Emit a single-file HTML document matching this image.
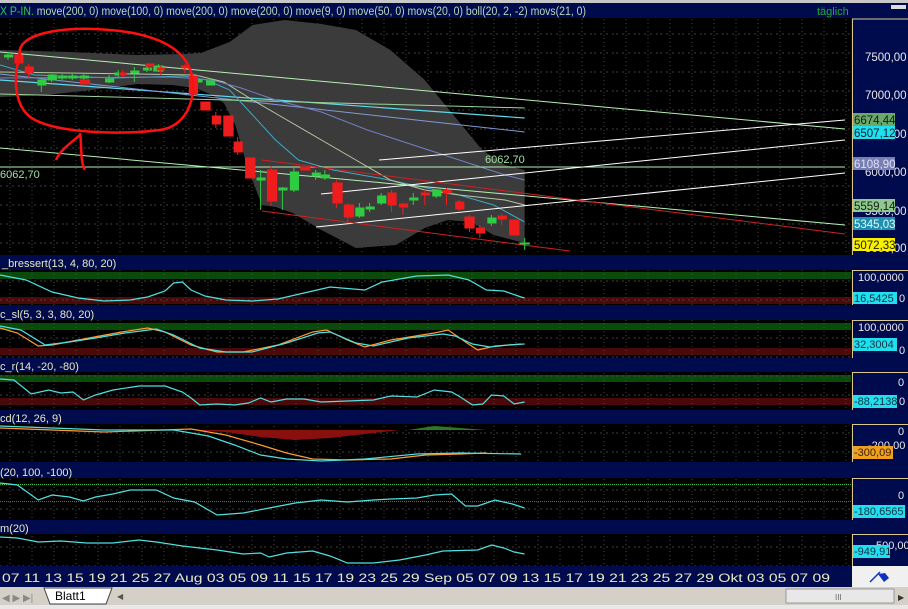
<!DOCTYPE html>
<html><head><meta charset="utf-8"><style>
html,body{margin:0;padding:0;background:#000;}
svg{display:block;font-family:"Liberation Sans",sans-serif;}
polyline,line{vector-effect:non-scaling-stroke;}
</style></head><body>
<svg width="908" height="609" viewBox="0 0 908 609" xmlns="http://www.w3.org/2000/svg">
<defs>
<pattern id="g" x="0" y="0" width="22" height="19" patternUnits="userSpaceOnUse">
<line x1="10" y1="0" x2="10" y2="19" stroke="#555" stroke-width="0.8" stroke-dasharray="1,3"/>
<line x1="0" y1="15" x2="22" y2="15" stroke="#555" stroke-width="0.8" stroke-dasharray="2,4"/>
</pattern>
</defs>
<rect width="908" height="609" fill="#000"/>
<rect x="0" y="0" width="908" height="3" fill="#c8c8c8"/>
<rect x="0" y="3" width="908" height="15" fill="#000b4e"/>
<text x="0" y="15" font-size="11.5" fill="#b8d8b8" textLength="586" lengthAdjust="spacingAndGlyphs"><tspan fill="#2ecc40">X P-IN.</tspan> move(200, 0) move(100, 0) move(200, 0) move(200, 0) move(9, 0) move(50, 0) movs(20, 0) boll(20, 2, -2) movs(21, 0)</text>
<text x="817" y="15" font-size="11" fill="#22aa33">täglich</text>
<rect x="891" y="5" width="15" height="4" fill="#ddd"/>
<rect x="0" y="18" width="851" height="237" fill="#000"/>
<rect x="0" y="18" width="851" height="237" fill="url(#g)"/>
<g transform="scale(1.148,1)">
<polygon points="0,50 60,52 120,55 160,54 175,53 200,42 220,25 248,20 280,24 310,30 340,50 370,80 395,115 420,150 440,165 457,170 457,243 430,235 410,222 390,220 370,228 345,245 310,248 280,230 255,213 240,207 228,205 215,165 205,125 195,103 185,95 170,88 150,85 120,84 100,87 80,90 40,95 0,97" fill="#3b3b3b"/>
<line x1="0" y1="80" x2="457" y2="118" stroke="#5fd7e8" stroke-width="1.2"/>
<line x1="0" y1="74" x2="457" y2="132" stroke="#7f9ad8" stroke-width="1"/>
<line x1="0" y1="94" x2="457" y2="108" stroke="#9ad59a" stroke-width="1"/>
<polyline points="0,65 30,75 100,78 160,76 180,80 200,90 220,115 240,140 260,160 290,170 330,178 360,185 400,195 430,205 457,222" fill="none" stroke="#3aa8c8" stroke-width="1"/>
<polyline points="0,72 120,74 170,75 195,82 220,100 250,120 280,140 310,160 340,180 370,190 400,195 440,200 457,205" fill="none" stroke="#b8c8a0" stroke-width="1"/>
<polyline points="0,78 150,77 185,80 210,88 240,100 280,112 320,130 360,145 400,160 440,175 457,180" fill="none" stroke="#7080c8" stroke-width="1"/>
</g>
<line x1="0" y1="52" x2="845" y2="129" stroke="#b5f0b5" stroke-width="1"/>
<line x1="0" y1="167" x2="845" y2="167" stroke="#b5f0b5" stroke-width="1"/>
<line x1="0" y1="148" x2="845" y2="225" stroke="#b5f0b5" stroke-width="1"/>
<line x1="379" y1="160" x2="845" y2="120" stroke="#fff" stroke-width="1"/>
<line x1="321" y1="194" x2="845" y2="140" stroke="#fff" stroke-width="1"/>
<line x1="316" y1="227" x2="845" y2="173" stroke="#fff" stroke-width="1"/>
<line x1="262" y1="160" x2="845" y2="234" stroke="#d02020" stroke-width="1"/>
<line x1="262" y1="211" x2="570" y2="251" stroke="#d02020" stroke-width="1"/>
<g transform="scale(1.148,1)" stroke-width="1">
<g fill="#2ecc40" stroke="#2ecc40">
<line x1="7" y1="52" x2="7" y2="60"/><rect x="4" y="55" width="7" height="2"/>
<line x1="36" y1="78" x2="36" y2="92"/><rect x="33" y="80" width="7" height="5"/>
<line x1="45" y1="74" x2="45" y2="82"/><rect x="42" y="75" width="7" height="5"/>
<line x1="54" y1="74" x2="54" y2="80"/><rect x="51" y="76" width="7" height="2"/>
<line x1="63" y1="73" x2="63" y2="80"/><rect x="60" y="76" width="7" height="2"/>
<line x1="73" y1="73" x2="73" y2="80"/><rect x="70" y="76" width="7" height="2"/>
<line x1="95" y1="75" x2="95" y2="83"/><rect x="92" y="79" width="7" height="3"/>
<line x1="103" y1="70" x2="103" y2="78"/><rect x="100" y="73" width="7" height="2"/>
<line x1="117" y1="67" x2="117" y2="82"/><rect x="114" y="71" width="7" height="2"/>
<line x1="128" y1="66" x2="128" y2="72"/><rect x="125" y="68" width="7" height="2"/>
<line x1="138" y1="64" x2="138" y2="72"/><rect x="134" y="66" width="8" height="5"/>
<line x1="172" y1="78" x2="172" y2="84"/><rect x="169" y="80" width="7" height="2"/>
<line x1="183" y1="78" x2="183" y2="84"/><rect x="180" y="81" width="7" height="4"/>
<line x1="227" y1="170" x2="227" y2="210"/><rect x="224" y="178" width="7" height="2"/>
<line x1="246" y1="187" x2="246" y2="210"/><rect x="243" y="188" width="7" height="2"/>
<line x1="256" y1="168" x2="256" y2="192"/><rect x="253" y="172" width="7" height="18"/>
<line x1="275" y1="170" x2="275" y2="180"/><rect x="272" y="173" width="7" height="3"/>
<line x1="283" y1="170" x2="283" y2="180"/><rect x="280" y="175" width="7" height="3"/>
<line x1="313" y1="203" x2="313" y2="218"/><rect x="310" y="208" width="7" height="8"/>
<line x1="322" y1="203" x2="322" y2="212"/><rect x="319" y="207" width="7" height="2"/>
<line x1="332" y1="193" x2="332" y2="205"/><rect x="329" y="196" width="7" height="7"/>
<line x1="360" y1="193" x2="360" y2="205"/><rect x="357" y="198" width="7" height="2"/>
<line x1="380" y1="189" x2="380" y2="198"/><rect x="377" y="190" width="7" height="6"/>
<line x1="428" y1="215" x2="428" y2="226"/><rect x="425" y="218" width="7" height="5"/>
<line x1="457" y1="238" x2="457" y2="250"/><rect x="453" y="243" width="8" height="1"/>
</g>
<g fill="#ee1c1c" stroke="#ee1c1c">
<line x1="16" y1="53" x2="16" y2="65"/><rect x="13" y="55" width="7" height="8"/>
<line x1="25" y1="64" x2="25" y2="78"/><rect x="22" y="67" width="7" height="6"/>
<rect x="70" y="80" width="8" height="4"/>
<line x1="107" y1="70" x2="107" y2="77"/><rect x="104" y="73" width="6" height="2"/>
<line x1="130" y1="63" x2="130" y2="70"/><rect x="127" y="64" width="7" height="2"/>
<line x1="140" y1="65" x2="140" y2="75"/><rect x="137" y="68" width="6" height="2"/>
<line x1="161" y1="64" x2="161" y2="73"/><rect x="158" y="66" width="6" height="2"/>
<line x1="168" y1="73" x2="168" y2="97"/><rect x="165" y="76" width="7" height="18"/>
<rect x="175" y="102" width="8" height="8"/>
<line x1="188" y1="112" x2="188" y2="128"/><rect x="185" y="116" width="7" height="8"/>
<rect x="195" y="116" width="8" height="20"/>
<line x1="207" y1="137" x2="207" y2="155"/><rect x="204" y="142" width="7" height="10"/>
<rect x="214" y="158" width="8" height="20"/>
<line x1="236" y1="166" x2="236" y2="206"/><rect x="233" y="170" width="8" height="31"/>
<rect x="262" y="167" width="8" height="3"/>
<line x1="293" y1="180" x2="293" y2="208"/><rect x="290" y="183" width="8" height="20"/>
<line x1="303" y1="203" x2="303" y2="222"/><rect x="300" y="205" width="8" height="12"/>
<line x1="341" y1="190" x2="341" y2="212"/><rect x="338" y="193" width="7" height="12"/>
<line x1="351" y1="203" x2="351" y2="215"/><rect x="348" y="204" width="7" height="3"/>
<line x1="370" y1="190" x2="370" y2="205"/><rect x="367" y="193" width="7" height="2"/>
<line x1="389" y1="188" x2="389" y2="205"/><rect x="386" y="190" width="7" height="3"/>
<line x1="400" y1="200" x2="400" y2="212"/><rect x="397" y="202" width="7" height="7"/>
<line x1="409" y1="215" x2="409" y2="232"/><rect x="405" y="217" width="8" height="11"/>
<line x1="418" y1="225" x2="418" y2="238"/><rect x="415" y="228" width="7" height="5"/>
<line x1="437" y1="213" x2="437" y2="225"/><rect x="434" y="216" width="7" height="3"/>
<rect x="444" y="220" width="8" height="15"/>
</g>
</g>
<path d="M20,55 C15,35 60,25 110,30 C150,33 175,45 185,60 C200,80 195,125 160,130 C120,135 60,133 35,120 C15,110 12,80 20,55 Z" fill="none" stroke="#ff1010" stroke-width="2.5"/>
<path d="M80,133 C82,145 80,162 85,170 M80,135 C72,142 60,150 56,160" fill="none" stroke="#ff1010" stroke-width="2.5"/>
<text x="0" y="178" font-size="11" fill="#a0e0a0">6062,70</text>
<text x="485" y="163" font-size="11" fill="#a0e0a0">6062,70</text>
<rect x="851" y="18" width="57" height="237" fill="#000b4e"/>
<line x1="852.5" y1="19" x2="852.5" y2="255" stroke="#d8c890" stroke-width="1"/>
<line x1="852" y1="19" x2="908" y2="19" stroke="#d8c890" stroke-width="1"/>
<g font-size="11.5" fill="#e8e8e8">
<text x="865" y="61">7500,00</text>
<text x="865" y="99">7000,00</text>
<text x="865" y="138">6500,00</text>
<text x="865" y="176">6000,00</text>
<text x="865" y="215">5500,00</text>
<text x="865" y="252">5000,00</text>
</g>
<g font-size="11.5">
<rect x="853" y="113" width="42" height="13" fill="#6ca86c"/><text x="854" y="124" fill="#102010">6674,44</text>
<rect x="853" y="126" width="42" height="13" fill="#20e0f0"/><text x="854" y="137" fill="#102030">6507,12</text>
<rect x="853" y="157" width="42" height="13" fill="#7880b0"/><text x="854" y="168" fill="#e0e0ff">6108,90</text>
<rect x="853" y="199" width="42" height="13" fill="#90c890"/><text x="854" y="210" fill="#102010">5559,14</text>
<rect x="853" y="217" width="42" height="13" fill="#2090b0"/><text x="854" y="228" fill="#e0f8ff">5345,03</text>
<rect x="853" y="238" width="42" height="13" fill="#f8f000"/><text x="854" y="249" fill="#202000">5072,33</text>
</g>

<rect x="0" y="255" width="908" height="15" fill="#000b4e"/>
<text x="2" y="267" font-size="11" fill="#e8e8c0">_bressert(13, 4, 80, 20)</text>
<rect x="0" y="272" width="851" height="7" fill="#0a4a0a"/>
<rect x="0" y="297" width="851" height="7" fill="#4a0a0a"/>
<rect x="0" y="270" width="851" height="35" fill="url(#g)"/>
<rect x="0" y="305" width="908" height="15" fill="#000b4e"/>
<text x="0" y="318" font-size="11" fill="#e8e8c0">c_sl(5, 3, 3, 80, 20)</text>
<rect x="0" y="323" width="851" height="7" fill="#0a4a0a"/>
<rect x="0" y="348" width="851" height="7" fill="#4a0a0a"/>
<rect x="0" y="320" width="851" height="38" fill="url(#g)"/>
<rect x="0" y="358" width="908" height="14" fill="#000b4e"/>
<text x="0" y="370" font-size="11" fill="#e8e8c0">c_r(14, -20, -80)</text>
<rect x="0" y="375" width="851" height="7" fill="#0a4a0a"/>
<rect x="0" y="398" width="851" height="7" fill="#4a0a0a"/>
<rect x="0" y="372" width="851" height="38" fill="url(#g)"/>
<rect x="0" y="410" width="908" height="14" fill="#000b4e"/>
<text x="0" y="422" font-size="11" fill="#e8e8c0">cd(12, 26, 9)</text>
<rect x="0" y="424" width="851" height="38" fill="url(#g)"/>
<rect x="0" y="462" width="908" height="16" fill="#000b4e"/>
<text x="0" y="476" font-size="11" fill="#e8e8c0">(20, 100, -100)</text>
<rect x="0" y="478" width="851" height="42" fill="url(#g)"/>
<line x1="0" y1="484.5" x2="851" y2="484.5" stroke="#40c040" stroke-width="1" stroke-dasharray="1,1"/>
<line x1="0" y1="501.5" x2="851" y2="501.5" stroke="#c04040" stroke-width="1" stroke-dasharray="1,1"/>
<rect x="0" y="520" width="908" height="14" fill="#000b4e"/>
<text x="0" y="532" font-size="11" fill="#e8e8c0">m(20)</text>
<rect x="0" y="534" width="851" height="32" fill="url(#g)"/>

<g transform="scale(1.737,1)">
<polyline points="0,275 15,280 30,292 45,298 60,301 75,300 85,297 95,291 100,283 105,282 110,290 118,296 130,300 145,301 160,299 175,293 190,287 210,290 220,282 240,276 258,275 270,280 280,290 290,291 300,297 302,298" fill="none" stroke="#50e0e0" stroke-width="1.2"/>
<polyline points="0,328 10,333 22,346 30,345 45,340 70,332 85,328 95,332 110,345 125,352 140,352 160,345 180,332 188,330 200,340 210,347 225,340 250,333 258,330 268,342 275,350 285,346 300,344" fill="none" stroke="#ff9a30" stroke-width="1.2"/>
<polyline points="0,326 12,330 26,345 40,342 55,338 72,333 90,329 100,335 115,348 130,352 145,352 165,343 183,333 190,332 205,343 215,346 235,338 255,334 262,336 272,344 282,347 293,345 302,344" fill="none" stroke="#50e0e0" stroke-width="1.2"/>
<polyline points="0,379 8,380 18,394 28,390 35,393 42,392 48,400 55,395 65,390 80,386 95,386 105,392 110,398 115,405 125,404 135,405 143,403 150,398 156,402 165,399 175,399 185,402 200,401 215,400 225,396 240,397 250,390 260,392 265,397 272,405 278,404 283,395 290,396 296,404 302,402" fill="none" stroke="#50e0e0" stroke-width="1.2"/>
<polygon points="110,430 130,432 150,437 170,440 190,438 210,434 230,430 110,430" fill="#8a1010"/>
<polygon points="235,430 250,426 265,428 280,430" fill="#2a7a2a"/>
<polyline points="0,428 60,432 110,429 130,435 150,445 165,453 180,459 200,460 225,459 245,455 265,454 280,453" fill="none" stroke="#ff9a30" stroke-width="1.2"/>
<polyline points="0,426 60,430 100,430 120,436 135,445 150,455 165,459 185,461 210,459 240,454 265,453 300,454" fill="none" stroke="#50e0e0" stroke-width="1.2"/>
<polyline points="0,483 10,485 22,500 30,495 40,497 48,501 55,497 65,494 75,490 90,490 100,498 112,502 125,515 140,513 155,508 170,503 185,500 200,502 215,500 225,499 240,498 250,495 260,494 268,506 275,506 285,500 295,504 302,508" fill="none" stroke="#50e0e0" stroke-width="1.2"/>
<polyline points="0,537 10,538 22,542 35,541 50,543 65,543 80,540 90,542 105,546 125,550 140,554 150,553 155,557 165,553 180,551 190,556 200,563 215,563 230,560 245,555 255,551 275,550 283,545 290,548 296,552 302,554" fill="none" stroke="#50e0e0" stroke-width="1.2"/>
</g>

<rect x="851" y="270" width="57" height="35" fill="#000b4e"/>
<rect x="852" y="270" width="1" height="35" fill="#d8c890"/><rect x="852" y="270" width="56" height="1" fill="#d8c890"/>
<text x="858" y="281" font-size="11" fill="#e8e8e8">100,0000</text>
<rect x="853" y="292" width="44" height="12" fill="#20e0f0"/><text x="854" y="302" font-size="11" fill="#103040">16,5425</text><text x="899" y="302" font-size="11" fill="#e8e8e8">0</text>
<rect x="851" y="320" width="57" height="38" fill="#000b4e"/>
<rect x="852" y="320" width="1" height="38" fill="#d8c890"/><rect x="852" y="320" width="56" height="1" fill="#d8c890"/>
<text x="858" y="331" font-size="11" fill="#e8e8e8">100,0000</text>
<rect x="853" y="338" width="44" height="13" fill="#20e0f0"/><text x="854" y="348" font-size="11" fill="#103040">32,3004</text><text x="899" y="354" font-size="11" fill="#e8e8e8">0</text>
<rect x="851" y="372" width="57" height="38" fill="#000b4e"/>
<rect x="852" y="372" width="1" height="38" fill="#d8c890"/><rect x="852" y="372" width="56" height="1" fill="#d8c890"/>
<text x="898" y="386" font-size="11" fill="#e8e8e8">0</text>
<rect x="853" y="395" width="44" height="13" fill="#20e0f0"/><text x="854" y="405" font-size="11" fill="#103040">-88,2138</text><text x="899" y="405" font-size="11" fill="#e8e8e8">0</text>
<rect x="851" y="424" width="57" height="38" fill="#000b4e"/>
<rect x="852" y="424" width="1" height="38" fill="#d8c890"/><rect x="852" y="424" width="56" height="1" fill="#d8c890"/>
<text x="898" y="435" font-size="11" fill="#e8e8e8">0</text>
<text x="868" y="449" font-size="11" fill="#e8e8e8">-200,00</text>
<rect x="853" y="446" width="40" height="13" fill="#f0a020"/><text x="854" y="456" font-size="11" fill="#402000">-300,09</text>
<rect x="851" y="478" width="57" height="42" fill="#000b4e"/>
<rect x="852" y="478" width="1" height="42" fill="#d8c890"/><rect x="852" y="478" width="56" height="1" fill="#d8c890"/>
<text x="898" y="499" font-size="11" fill="#e8e8e8">0</text>
<rect x="853" y="505" width="52" height="13" fill="#20e0f0"/><text x="854" y="515" font-size="11" fill="#103040">-180,6565</text>
<rect x="851" y="534" width="57" height="32" fill="#000b4e"/>
<rect x="852" y="534" width="1" height="32" fill="#d8c890"/><rect x="852" y="534" width="56" height="1" fill="#d8c890"/>
<text x="876" y="549" font-size="11" fill="#e8e8e8">500,00</text>
<rect x="853" y="545" width="37" height="13" fill="#20e0f0"/><text x="854" y="555" font-size="11" fill="#103040">-949,91</text>

<rect x="0" y="566" width="852" height="21" fill="#000b4e"/>
<text x="2" y="582" font-size="12" fill="#e8e8c0" textLength="828" lengthAdjust="spacingAndGlyphs">07  11  13  15  19  21  25  27    Aug 03  05  09  11  15  17  19  23  25  29    Sep 05  07  09  13  15  17  19  21  23  25  27  29  Okt 03  05  07  09</text>
<rect x="852" y="566" width="56" height="21" fill="#f0f0f0"/>
<line x1="870" y1="582" x2="880" y2="572" stroke="#1030c0" stroke-width="1.5"/>
<polygon points="878,574 885,573 889,578 884,582" fill="#1030c0"/>
<rect x="0" y="587" width="908" height="22" fill="#d4d0c8"/>
<text x="2" y="601" font-size="10" fill="#888">◀ ▶ ▶|</text>
<polygon points="44,588 50,604 106,604 112,588" fill="#fff" stroke="#404040"/>
<text x="55" y="600" font-size="12" fill="#000">Blatt1</text>
<text x="117" y="599" font-size="8" fill="#555">◀</text>
<rect x="786" y="589" width="108" height="14" fill="#e8e8e8" stroke="#999"/>
<text x="835" y="600" font-size="8" fill="#666">III</text>
<text x="898" y="600" font-size="8" fill="#333">▶</text>
<rect x="0" y="605" width="908" height="4" fill="#e8e8e8"/>
</svg>
</body></html>
